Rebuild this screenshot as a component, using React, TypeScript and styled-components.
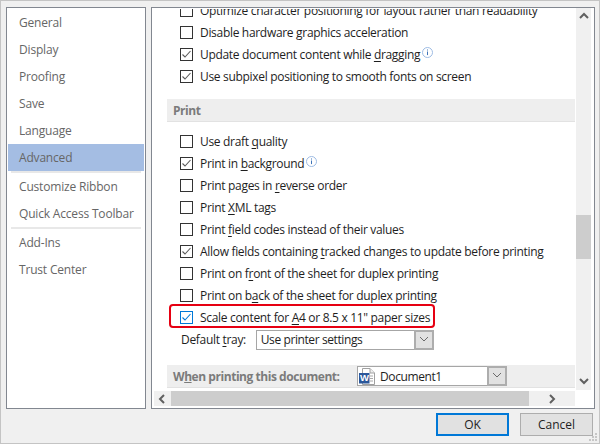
import styled, { createGlobalStyle } from "styled-components";

const navGroups = [
  ["General", "Display", "Proofing", "Save", "Language", "Advanced"],
  ["Customize Ribbon", "Quick Access Toolbar"],
  ["Add-Ins", "Trust Center"],
];

const GlobalStyle = createGlobalStyle`
  * {
    box-sizing: border-box;
  }
  body {
    margin: 0;
    font-family: "Open Sans", "Noto Sans", sans-serif;
    font-size: 12px;
    color: #1e1e1e;
  }
`;

const Dialog = styled.div`
  position: relative;
  width: 600px;
  height: 444px;
  background: #f0f0f0;
  border: 1px solid #c4c4c4;
  padding: 6px 4px 0 5px;
  display: flex;
  flex-direction: column;
`;

const Panels = styled.div`
  display: flex;
  gap: 5px;
  height: 402px;
`;

const NavPanel = styled.nav`
  width: 141px;
  background: #fff;
  border: 1px solid #828790;
  padding: 1px;
`;

const NavItem = styled.div<{ $active?: boolean }>`
  height: 27px;
  line-height: 27px;
  padding-left: 11px;
  color: #666;
  letter-spacing: -0.18px;
  background: ${(p) => (p.$active ? "#a4bde3" : "transparent")};
`;

const NavDivider = styled.div`
  height: 2px;
  margin: 0 3px;
  background: #e8e8e8;
`;

const OptionsPanel = styled.section`
  flex: 1;
  background: #fff;
  border: 1px solid #828790;
  padding: 1px 3px 2px 1px;
  display: grid;
  grid-template-columns: 422px 15px;
  grid-template-rows: 382px 15px;
  column-gap: 1px;
`;

const Viewport = styled.div`
  overflow: hidden;
`;

const Content = styled.div`
  margin-top: -10px;
  padding-left: 14px;
`;

const Row = styled.div`
  position: relative;
  height: 22px;
  padding-left: 13px;
  display: flex;
  align-items: center;
  gap: 7px;
  white-space: nowrap;
`;

const Label = styled.span`
  letter-spacing: -0.31px;
  u {
    text-underline-offset: 2px;
  }
`;

const Box = styled.span<{ $focused?: boolean }>`
  flex: none;
  width: 13px;
  height: 13px;
  background: #fff;
  border: 1px solid ${(p) => (p.$focused ? "#0078d7" : "#333")};
  display: flex;
  align-items: center;
  justify-content: center;
`;

const Highlight = styled.div`
  position: absolute;
  top: -2px;
  left: 2px;
  width: 266px;
  height: 24px;
  border: 2px solid #e60012;
  border-radius: 4px;
  pointer-events: none;
`;

const SectionBar = styled.div<{ $top: number; $bottom?: number }>`
  height: 23px;
  margin: ${(p) => p.$top}px 0 ${(p) => p.$bottom ?? 0}px;
  padding-left: 6px;
  background: #eee;
  border-bottom: 1px solid #e2e2e2;
  display: flex;
  align-items: center;
  color: #7b7b7b;
  font-weight: 700;
  letter-spacing: -0.45px;
  white-space: nowrap;
`;

const BarTitle = styled.span`
  width: 184px;
`;

const TrayRow = styled.div`
  height: 23px;
  padding-left: 14px;
  display: flex;
  align-items: center;
`;

const TrayLabel = styled(Label)`
  width: 75px;
`;

const Select = styled.div<{ $width: number }>`
  width: ${(p) => p.$width}px;
  height: 20px;
  background: #fff;
  border: 1px solid #a6a6a6;
  display: flex;
  align-items: center;
  justify-content: space-between;
  padding-left: 1px;
  color: #1e1e1e;
  font-weight: 400;
  letter-spacing: -0.4px;
  white-space: nowrap;
`;

const SelectValue = styled.span`
  display: flex;
  align-items: center;
  gap: 4px;
`;

const DropButton = styled.span`
  width: 20px;
  height: 20px;
  margin-right: -1px;
  background: #e1e1e1;
  border: 2px solid #adadad;
  display: flex;
  align-items: center;
  justify-content: center;
`;

const VScroll = styled.div`
  background: #f0f0f0;
  margin-top: -1px;
  height: 382px;
  display: flex;
  flex-direction: column;
  align-items: center;
`;

const VThumb = styled.div`
  width: 15px;
  height: 44px;
  margin: 190px 0 auto;
  background: #cdcdcd;
`;

const ArrowSlot = styled.span<{ $w: number; $h: number }>`
  flex: none;
  width: ${(p) => p.$w}px;
  height: ${(p) => p.$h}px;
  display: flex;
  align-items: center;
  justify-content: center;
`;

const HScroll = styled.div`
  margin-left: 1px;
  background: #f0f0f0;
  display: flex;
  align-items: center;
`;

const HThumb = styled.div`
  width: 358px;
  height: 15px;
  background: #cdcdcd;
`;

const Footer = styled.div`
  display: flex;
  justify-content: flex-end;
  gap: 11px;
  margin-top: 4px;
  padding-right: 2px;
`;

const Button = styled.button<{ $primary?: boolean }>`
  width: 73px;
  height: 23px;
  padding: 0;
  background: #e1e1e1;
  border: ${(p) => (p.$primary ? "2px solid #0078d7" : "1px solid #adadad")};
  font: inherit;
  color: #1e1e1e;
`;

const Grip = styled.svg`
  position: absolute;
  right: 1px;
  bottom: 1px;
`;

const InfoSvg = styled.svg`
  margin-left: -5px;
  margin-top: -4px;
`;

const Check = ({ color }: { color: string }) => (
  <svg width="11" height="11" viewBox="0 0 11 11">
    <path d="M1.5 5.5 L4 8 L9.5 2" fill="none" stroke={color} strokeWidth="1.1" />
  </svg>
);

const Checkbox = ({ checked, focused }: { checked?: boolean; focused?: boolean }) => (
  <Box $focused={focused}>{checked && <Check color={focused ? "#0078d7" : "#5a5a5a"} />}</Box>
);

const InfoIcon = () => (
  <InfoSvg width="11" height="11" viewBox="0 0 11 11">
    <circle cx="5.5" cy="5.5" r="5" fill="#fff" stroke="#9dbbe3" />
    <path d="M5.5 2.5v1M5.5 4.5v3.6" stroke="#3f74b8" strokeWidth="1" />
  </InfoSvg>
);

const Chevron = ({ dir, thin }: { dir: "up" | "down" | "left" | "right"; thin?: boolean }) => {
  const points = {
    up: "1,6 5,2 9,6",
    down: "1,2 5,6 9,2",
    left: "6,1 2,5 6,9",
    right: "3,1 7,5 3,9",
  }[dir];
  return (
    <svg width="10" height="10" viewBox="0 0 10 10">
      <polyline
        points={points}
        fill="none"
        stroke={thin ? "#6a6a6a" : "#606060"}
        strokeWidth={thin ? 1 : 2}
      />
    </svg>
  );
};

const WordIcon = () => (
  <svg width="17" height="17" viewBox="0 0 17 17">
    <path d="M3.5 0.5 H11 L15.5 5 V16.5 H3.5 Z" fill="#fff" stroke="#a0a0a0" />
    <path d="M11 0.5 V5 H15.5" fill="#eee" stroke="#a0a0a0" />
    <path d="M11 8h3M11 10.5h3M11 13h3" stroke="#a8a8a8" />
    <rect x="0" y="5" width="10.5" height="10.5" fill="#2b579a" />
    <text x="5.2" y="13.4" textAnchor="middle" fontSize="9.5" fontWeight="700" fill="#fff" fontFamily="Liberation Sans">
      W
    </text>
  </svg>
);

const App = () => (
  <Dialog>
    <GlobalStyle />
    <Panels>
      <NavPanel>
        {navGroups.map((group, i) => (
          <div key={group[0]}>
            {i > 0 && <NavDivider />}
            {group.map((name) => (
              <NavItem key={name} $active={name === "Advanced"}>
                {name}
              </NavItem>
            ))}
          </div>
        ))}
      </NavPanel>
      <OptionsPanel>
        <Viewport>
          <Content>
            <Row>
              <Checkbox />
              <Label>Optimize character positioning for layout rather than readability</Label>
            </Row>
            <Row>
              <Checkbox />
              <Label>Disable hardware <u>g</u>raphics acceleration</Label>
            </Row>
            <Row>
              <Checkbox checked />
              <Label>Update document content while <u>d</u>ragging</Label>
              <InfoIcon />
            </Row>
            <Row>
              <Checkbox checked />
              <Label>Use subpixel positioning to smooth fonts on screen</Label>
            </Row>
            <SectionBar $top={12} $bottom={8}>Print</SectionBar>
            <Row>
              <Checkbox />
              <Label>Use draft <u>q</u>uality</Label>
            </Row>
            <Row>
              <Checkbox checked />
              <Label>Print in <u>b</u>ackground</Label>
              <InfoIcon />
            </Row>
            <Row>
              <Checkbox />
              <Label>Print pages in <u>r</u>everse order</Label>
            </Row>
            <Row>
              <Checkbox />
              <Label>Print <u>X</u>ML tags</Label>
            </Row>
            <Row>
              <Checkbox />
              <Label>Print <u>f</u>ield codes instead of their values</Label>
            </Row>
            <Row>
              <Checkbox checked />
              <Label>Allow fields containing <u>t</u>racked changes to update before printing</Label>
            </Row>
            <Row>
              <Checkbox />
              <Label>Print on f<u>r</u>ont of the sheet for duplex printing</Label>
            </Row>
            <Row>
              <Checkbox />
              <Label>Print on b<u>a</u>ck of the sheet for duplex printing</Label>
            </Row>
            <Row>
              <Checkbox checked focused />
              <Label>Scale content for <u>A</u>4 or 8.5 x 11" paper sizes</Label>
              <Highlight />
            </Row>
            <TrayRow>
              <TrayLabel>Default <u>t</u>ray:</TrayLabel>
              <Select $width={178}>
                <span>&nbsp;Use printer settings</span>
                <DropButton><Chevron dir="down" thin /></DropButton>
              </Select>
            </TrayRow>
            <SectionBar $top={14}>
              <BarTitle>W<u>h</u>en printing this document:</BarTitle>
              <Select $width={150}>
                <SelectValue>
                  <WordIcon />
                  Document1
                </SelectValue>
                <DropButton><Chevron dir="down" thin /></DropButton>
              </Select>
            </SectionBar>
          </Content>
        </Viewport>
        <VScroll>
          <ArrowSlot $w={15} $h={17}><Chevron dir="up" /></ArrowSlot>
          <VThumb />
          <ArrowSlot $w={15} $h={17}><Chevron dir="down" /></ArrowSlot>
        </VScroll>
        <HScroll>
          <ArrowSlot $w={17} $h={15}><Chevron dir="left" /></ArrowSlot>
          <HThumb />
          <ArrowSlot $w={46} $h={15}><Chevron dir="right" /></ArrowSlot>
        </HScroll>
      </OptionsPanel>
    </Panels>
    <Footer>
      <Button $primary>OK</Button>
      <Button>Cancel</Button>
    </Footer>
    <Grip width="10" height="10" viewBox="0 0 10 10">
      <path d="M7 1h2v2H7zM4 4h2v2H4zM7 4h2v2H7zM1 7h2v2H1zM4 7h2v2H4zM7 7h2v2H7z" fill="#c6c6c6" />
    </Grip>
  </Dialog>
);

export default App;
